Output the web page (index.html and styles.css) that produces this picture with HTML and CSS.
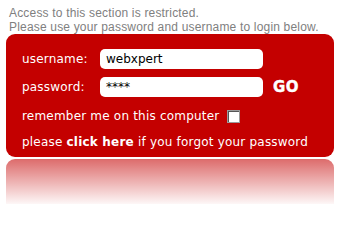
FILE: index.html
```html
<!DOCTYPE html>
<html>
<head>
<meta charset="utf-8">
<link rel="stylesheet" href="styles.css">
</head>
<body>
<div class="page">
  <p class="intro">Access to this section is restricted.<br>Please use your password and username to login below.</p>
  <div class="login">
    <div class="row">
      <span class="label">username:</span>
      <span class="field">webxpert</span>
    </div>
    <div class="row row-pass">
      <span class="label">password:</span>
      <span class="field">****</span>
      <span class="go">GO</span>
    </div>
    <div class="remember">remember me on this computer <span class="check"></span></div>
    <p class="forgot">please <b>click here</b> if you forgot your password</p>
  </div>
  <div class="reflection"></div>
</div>
</body>
</html>
```

FILE: styles.css
```css
html, body {
  margin: 0;
  padding: 0;
  background: #ffffff;
}
.page {
  padding: 0 9px 0 6px;
  width: 328px;
}
.intro {
  margin: 6px 0 0 3px;
  font-family: "Liberation Sans", Arial, sans-serif;
  font-size: 12px;
  letter-spacing: 0.18px;
  line-height: 14px;
  color: #808080;
}
.login {
  background: #c40000;
  border-radius: 9px;
  padding: 15px 16px 7px 16px;
  color: #ffffff;
  font-family: "DejaVu Sans", Verdana, sans-serif;
  font-size: 12px;
  letter-spacing: 0.2px;
}
.row {
  display: flex;
  align-items: center;
  height: 20px;
}
.row-pass {
  margin-top: 8px;
}
.label {
  width: 78px;
  flex: none;
}
.field {
  width: 157px;
  height: 20px;
  line-height: 20px;
  background: #ffffff;
  color: #000000;
  border-radius: 5px;
  padding-left: 6px;
  flex: none;
  letter-spacing: 0;
}
.go {
  margin-left: 10px;
  font-family: "DejaVu Sans", Verdana, sans-serif;
  font-weight: bold;
  font-size: 15px;
  letter-spacing: 0.5px;
  -webkit-text-stroke: 0.4px #ffffff;
  color: #ffffff;
}
.remember {
  margin-top: 11px;
  line-height: 16px;
  display: flex;
  align-items: center;
}
.check {
  display: inline-block;
  width: 11px;
  height: 11px;
  margin-left: 8px;
  background: #ffffff;
  border: 1px solid #9a9a9a;
  box-shadow: inset 1px 1px 0 #555555;
}
.forgot {
  margin: 10px 0 0 0;
  line-height: 16px;
}
.forgot b {
  font-weight: bold;
}
.reflection {
  margin-top: 2px;
  height: 45px;
  border-radius: 9px 9px 0 0;
  background: linear-gradient(to bottom, rgba(196, 0, 0, 0.58), rgba(196, 0, 0, 0.03));
}
```
